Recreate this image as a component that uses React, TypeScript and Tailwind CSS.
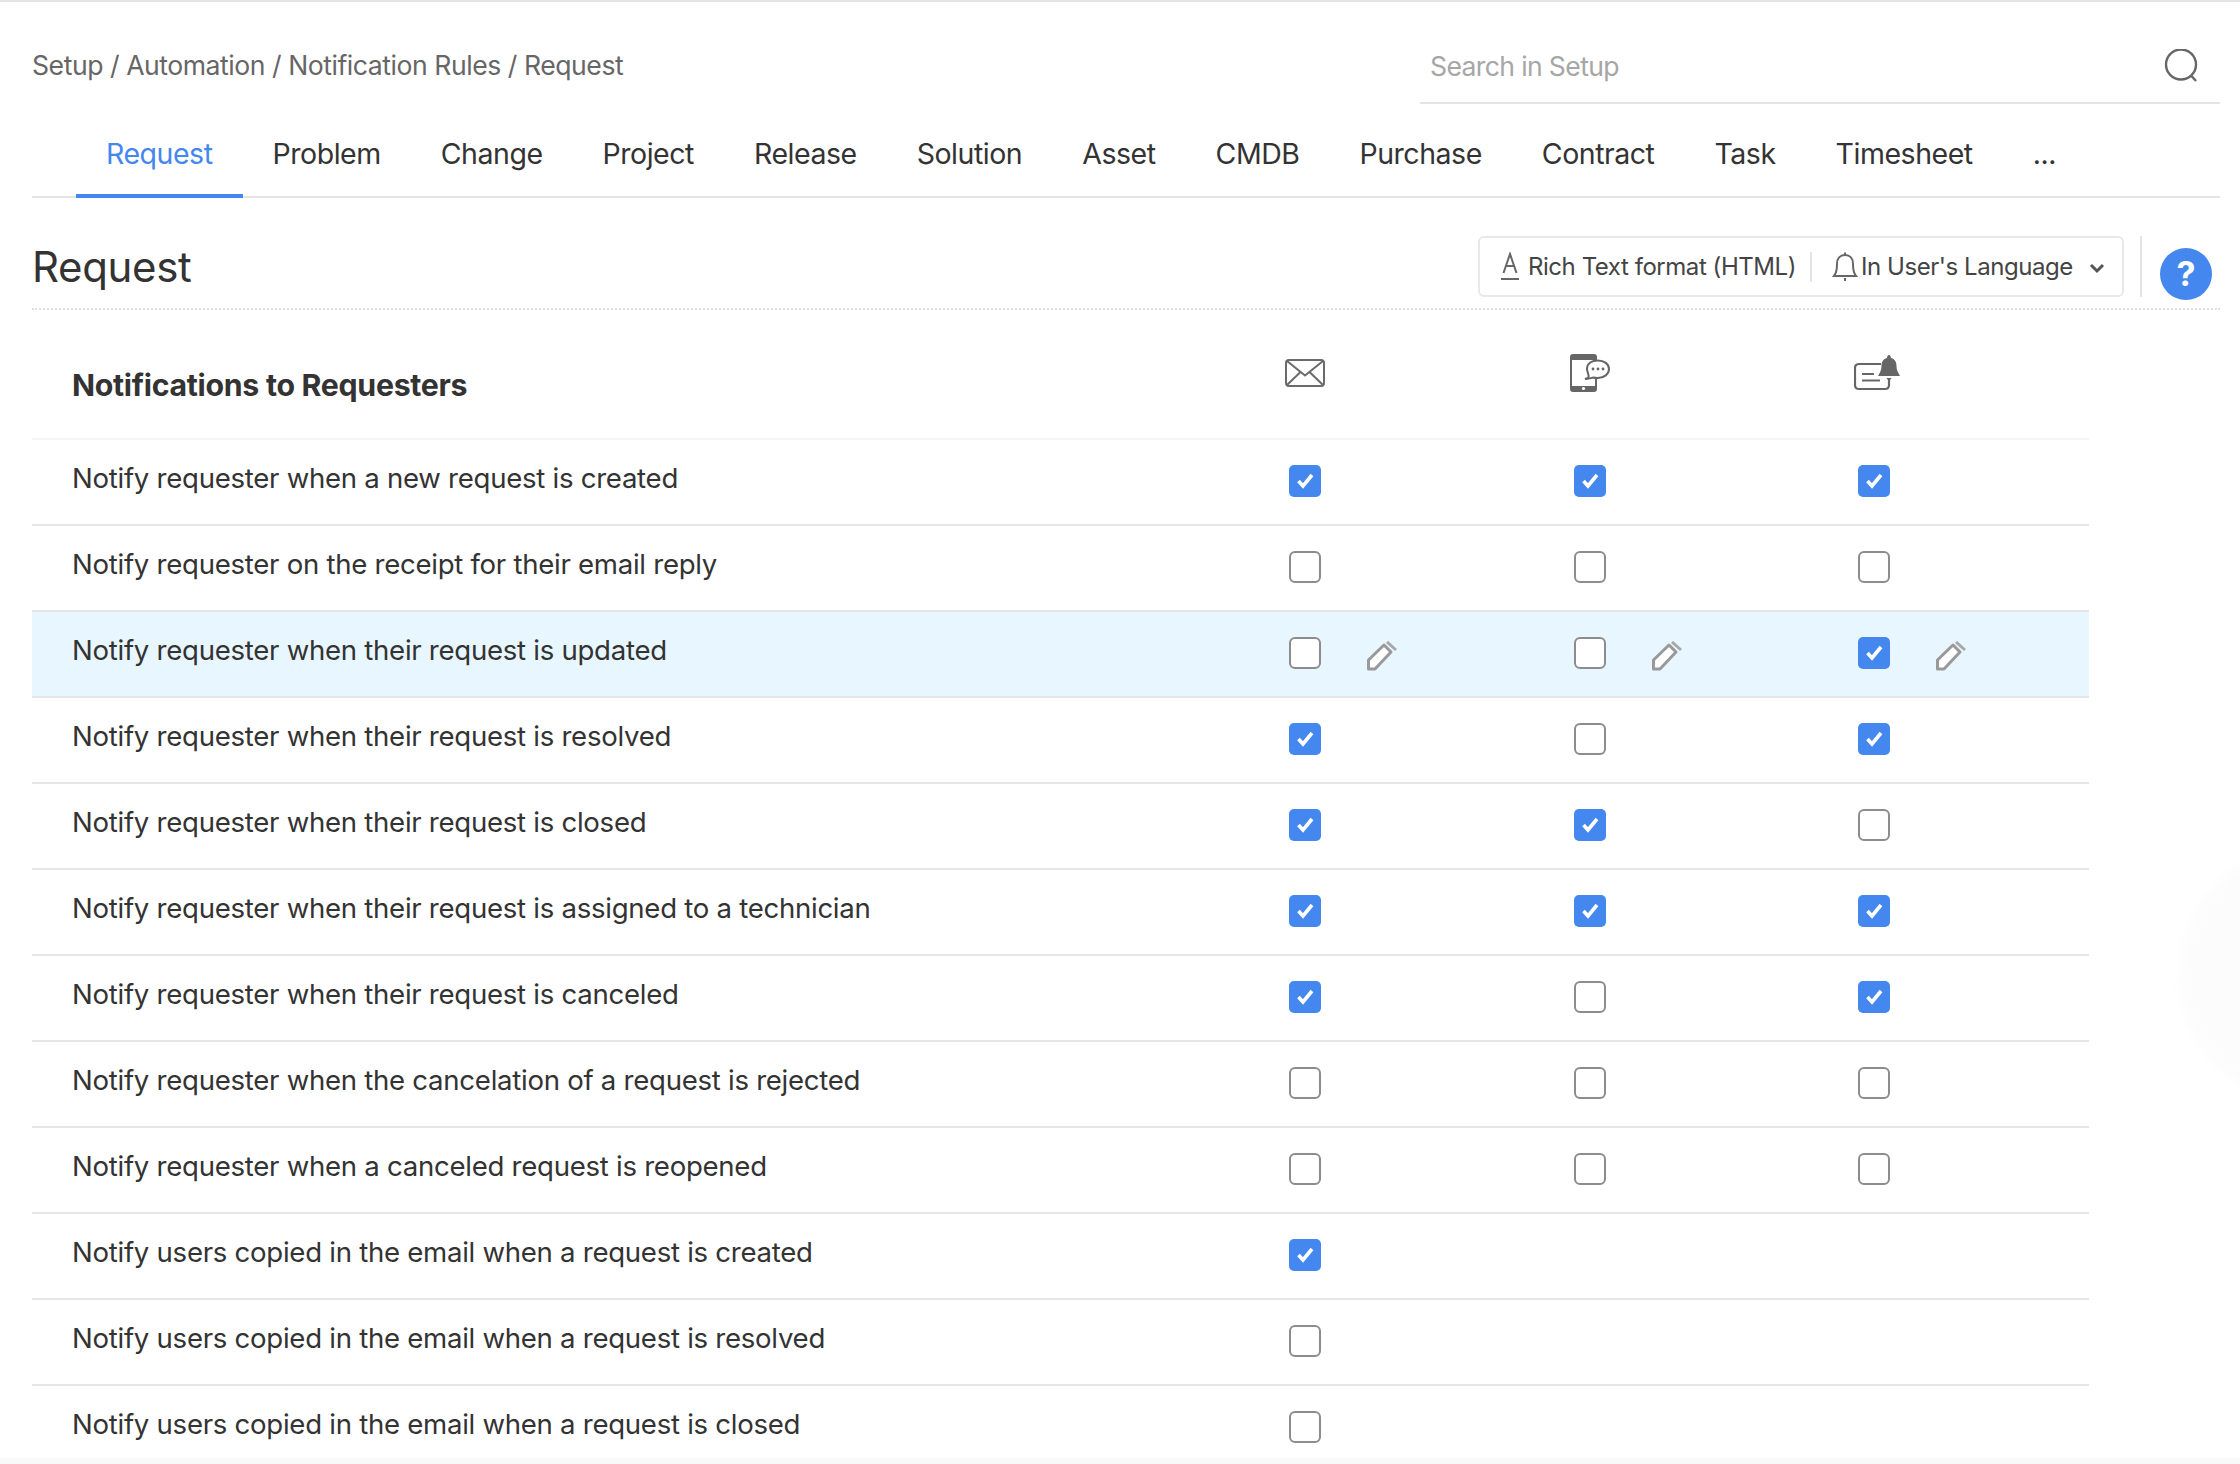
import React from "react";

const tabs = ["Request","Problem","Change","Project","Release","Solution","Asset","CMDB","Purchase","Contract","Task","Timesheet","..."];

type R = [string, number | null, number | null, number | null];
const rows: R[] = [
  ["Notify requester when a new request is created",1,1,1],
  ["Notify requester on the receipt for their email reply",0,0,0],
  ["Notify requester when their request is updated",0,0,1],
  ["Notify requester when their request is resolved",1,0,1],
  ["Notify requester when their request is closed",1,1,0],
  ["Notify requester when their request is assigned to a technician",1,1,1],
  ["Notify requester when their request is canceled",1,0,1],
  ["Notify requester when the cancelation of a request is rejected",0,0,0],
  ["Notify requester when a canceled request is reopened",0,0,0],
  ["Notify users copied in the email when a request is created",1,null,null],
  ["Notify users copied in the email when a request is resolved",0,null,null],
  ["Notify users copied in the email when a request is closed",0,null,null],
];

function Pencil() {
  return (
    <svg width="30" height="30" viewBox="0 0 30 30" fill="none" className="ml-[46px] mt-[5px]">
      <path d="M17 4 L24 11 L8 28 H1.5 V19 Z" fill="#fff" stroke="#999" strokeWidth="3" strokeLinejoin="round" />
      <path d="M20 1 L29 9" stroke="#a8a8a8" strokeWidth="3" />
    </svg>
  );
}

function Box({ on, edit }: { on: number | null; edit: boolean }) {
  if (on === null) return <div />;
  return (
    <div className="flex items-center">
      {on ? (
        <div className="w-[32px] h-[32px] rounded-[5px] bg-[#4487ee] flex items-center justify-center">
          <svg width="32" height="32" viewBox="0 0 32 32" fill="none">
            <path d="M9.5 16 L14 21 L23 10" stroke="#fff" strokeWidth="3.6" />
          </svg>
        </div>
      ) : (
        <div className="w-[32px] h-[32px] rounded-[6px] bg-white border-2 border-[#8c8c8c]" />
      )}
      {edit && <Pencil />}
    </div>
  );
}

function Row({ r, active }: { r: R; active: boolean }) {
  return (
    <div className={`grid grid-cols-[1257px_285px_284px_1fr] items-center h-[86px] border-b-2 border-[#e6e6e6] pb-[2px] ${active ? "bg-[#e8f7ff]" : ""}`}>
      <div className="pl-[40px] pb-[6px] text-[27.6px] leading-[36px] tracking-[-0.28px] text-[#333]">{r[0]}</div>
      <Box on={r[1]} edit={active} />
      <Box on={r[2]} edit={active} />
      <Box on={r[3]} edit={active} />
    </div>
  );
}

export default function App() {
  return (
    <div className="relative w-[2240px] h-[1464px] overflow-hidden bg-white font-['Inter','Liberation_Sans',sans-serif] border-t-2 border-[#e4e4e4]">
      <div className="absolute right-[-200px] top-[843px] w-[260px] h-[260px] rounded-full bg-[#fcfcfc] blur-[6px]" />
      <div className="absolute left-0 right-0 bottom-0 h-[6px] bg-[#f9f9f9] z-10" />

      <div className="relative pl-[32px] pr-[20px]">
        {/* top bar */}
        <div className="flex h-[102px]">
          <div className="flex-1 pt-[46px] text-[26.6px] leading-[34px] tracking-[-0.46px] text-[#666]">
            Setup / Automation / Notification Rules / Request
          </div>
          <div className="w-[800px] h-[102px] border-b-2 border-[#e4e4e4] flex items-center justify-between pl-[10px] pr-[20px] pt-[28px]">
            <span className="text-[26.6px] leading-[34px] tracking-[-0.65px] text-[#a6a6a6]">Search in Setup</span>
            <svg width="36" height="34" viewBox="0 0 36 34" fill="none" stroke="#666" strokeWidth="2.4">
              <circle cx="17" cy="15.5" r="15" />
              <path d="M27 26.5 L32 32" />
            </svg>
          </div>
        </div>

        {/* tabs */}
        <div className="flex h-[94px] pl-[44px] border-b-2 border-[#e4e4e4] text-[#333]">
          {tabs.map((t, i) => (
            <div
              key={t}
              className={`px-[30px] h-[94px] pt-[32px] text-[28.5px] leading-[36px] tracking-[-0.47px] ${i === 0 ? "text-[#4487ee] border-b-4 border-[#4487ee]" : ""}`}
            >
              {t}
            </div>
          ))}
        </div>

        {/* title bar */}
        <div className="flex items-start h-[112px] border-b-2 border-dotted border-[#e0e0e0]">
          <div className="flex-1 pt-[43px] text-[42px] leading-[52px] tracking-[-0.35px] text-[#333]">Request</div>
          <div className="mt-[38px] w-[646px] h-[61px] rounded-[6px] border-2 border-[#e8e8e8] flex items-center pl-[20px] text-[24px] leading-[32px] tracking-[-0.45px] text-[#444]">
            <svg width="20" height="30" viewBox="0 0 20 30" fill="none" stroke="#666" strokeWidth="2">
              <path d="M3.5 21 L10 2 L16.5 21 M6 14 H14" />
              <path d="M1 27 H19" />
            </svg>
            <span className="ml-[8px] w-[266px] whitespace-nowrap">Rich Text format (HTML)</span>
            <div className="ml-[16px] w-[2px] h-[30px] bg-[#e4e4e4]" />
            <svg width="26" height="32" viewBox="0 0 26 32" fill="none" stroke="#666" strokeWidth="2" className="ml-[20px]">
              <path d="M13 1.5 V4 M2 25 C4.5 22 5 19 5 13 C5 7.5 8 4 13 4 C18 4 21 7.5 21 13 C21 19 21.5 22 24 25 Z" />
              <path d="M13 27 V30" />
            </svg>
            <span className="ml-[3px] w-[216px] whitespace-nowrap">In User's Language</span>
            <svg width="16" height="12" viewBox="0 0 16 12" fill="none" stroke="#555" strokeWidth="3" className="ml-[12px] mt-[2px]">
              <path d="M2 3 L8 9 L14 3" />
            </svg>
          </div>
          <div className="ml-[16px] mt-[38px] w-[2px] h-[61px] bg-[#e4e4e4]" />
          <div className="ml-[18px] mr-[8px] mt-[50px] w-[52px] h-[52px] rounded-full bg-[#4487ee] flex items-center justify-center text-white text-[34px] font-bold leading-none">?</div>
        </div>

        {/* table */}
        <div className="w-[2057px]">
          <div className="grid grid-cols-[1257px_285px_284px_1fr] items-center h-[130px] border-b-2 border-[#f5f5f5]">
            <div className="pl-[40px] pt-[22px] text-[30.3px] leading-[38px] tracking-[-0.3px] font-bold text-[#333]">Notifications to Requesters</div>
            <svg width="40" height="28" viewBox="0 0 40 28" fill="none" stroke="#6b6b6b" strokeWidth="2" className="-ml-[4px] -mt-[2px]">
              <rect x="1" y="1" width="38" height="26" rx="3" />
              <path d="M2 2 L20 16.5 L38 2 M2 26 L15.5 13 M38 26 L24.5 13" />
            </svg>
            <svg width="40" height="38" viewBox="0 0 40 38" fill="none" className="-ml-[4px] -mt-[2px]">
              <path d="M1 18 V3 Q1 1 3 1 H24 Q26 1 26 3 V8 M26 25 V35 Q26 37 24 37 H3 Q1 37 1 35 V18" stroke="#666" strokeWidth="2" />
              <rect x="1" y="1" width="25" height="5" fill="#666" />
              <rect x="1" y="32" width="25" height="5" fill="#666" />
              <circle cx="13.5" cy="34.5" r="1.6" fill="#fff" />
              <path d="M18 24 C20 22 17 18 17 15 C17 9 22 6.5 28 6.5 C34 6.5 39 10 39 15 C39 20 34 24 28 24 C26 24 24.5 24 23 23.5 C21.5 24.5 19.5 24.5 15 25 Z" fill="#fff" stroke="#666" strokeWidth="2" />
              <circle cx="23" cy="15" r="1.4" fill="#666" />
              <circle cx="28" cy="15" r="1.4" fill="#666" />
              <circle cx="33" cy="15" r="1.4" fill="#666" />
            </svg>
            <svg width="46" height="36" viewBox="0 0 46 36" fill="none" className="-ml-[4px] -mt-[3px]">
              <path d="M27 9 H5 Q1 9 1 13 V30 Q1 34 5 34 H31 Q35 34 35 30 V24" stroke="#666" strokeWidth="2.2" />
              <path d="M8 19 H20 M8 25.5 H26" stroke="#666" strokeWidth="2.2" />
              <path d="M35 0 C36.5 0 37 2 37 3 C41 4 42.5 7 42.5 11 C42.5 15 44 17.5 46 21 H24 C26 17.5 27.5 15 27.5 11 C27.5 7 29 4 33 3 C33 2 33.5 0 35 0 Z" fill="#666" />
              <path d="M32.5 23 H37.5 L35 26.5 Z" fill="#666" />
            </svg>
          </div>
          {rows.map((r, i) => (
            <Row key={r[0]} r={r} active={i === 2} />
          ))}
        </div>
      </div>
    </div>
  );
}
